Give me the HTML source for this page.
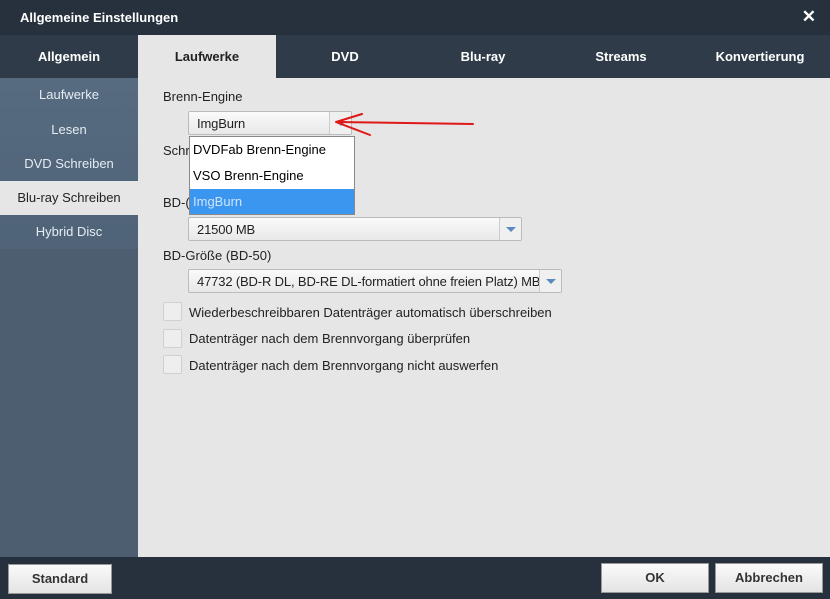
<!DOCTYPE html>
<html><head><style>
*{margin:0;padding:0;box-sizing:border-box}
body{width:830px;height:599px;background:#27313d;font-family:"Liberation Sans",sans-serif;position:relative;overflow:hidden}
.a{position:absolute}
.title{left:20px;top:10px;color:#fff;font-weight:bold;font-size:13px}
.tab{top:35px;height:43px;line-height:43px;text-align:center;color:#fff;font-weight:bold;font-size:13px;background:#2f3b49}
.side{left:0;top:78px;width:138px;height:479px;background:linear-gradient(#566a80,#44566a)}
.si{left:0;width:138px;height:34px;line-height:34px;text-align:center;color:#e6ecf2;font-size:13px}
.content{left:138px;top:78px;width:692px;height:479px;background:#e6e6e6}
.lbl{font-size:13px;color:#222}
.sel{background:linear-gradient(#fafafa,#e8e8e8);border:1px solid #bbb;border-radius:2px;font-size:13px;color:#222;padding-left:8px;line-height:23px;height:24px;white-space:nowrap;overflow:hidden;letter-spacing:-0.15px}
.arr{position:absolute;right:0;top:0;width:22px;height:22px;border-left:1px solid #ccc;background:#f0f0f0}
.arr:after{content:"";position:absolute;left:6px;top:9px;border-left:5px solid transparent;border-right:5px solid transparent;border-top:5px solid #5a8ac0}
.cb{width:19px;height:19px;background:#eee;border:1px solid #d0d0d0;border-radius:2px}
.btn{background:linear-gradient(#fafafa,#e4e4e4);border:1px solid #999;text-align:center;font-weight:bold;font-size:13px;color:#333;line-height:28px;height:30px}
</style></head><body>
<div class="a title">Allgemeine Einstellungen</div>
<div class="a" style="right:14px;top:7px;color:#fff;font-weight:bold;font-size:17px">✕</div>
<div class="a tab" style="left:0;width:138px">Allgemein</div>
<div class="a tab" style="left:138px;width:138px;background:#e6e6e6;color:#222">Laufwerke</div>
<div class="a tab" style="left:276px;width:138px">DVD</div>
<div class="a tab" style="left:414px;width:138px">Blu-ray</div>
<div class="a tab" style="left:552px;width:138px">Streams</div>
<div class="a tab" style="left:690px;width:140px">Konvertierung</div>
<div class="a side"></div>
<div class="a si" style="top:78px">Laufwerke</div>
<div class="a si" style="top:113px">Lesen</div>
<div class="a si" style="top:147px">DVD Schreiben</div>
<div class="a si" style="top:181px;background:#e6e6e6;color:#222">Blu-ray Schreiben</div>
<div class="a si" style="top:215px">Hybrid Disc</div>
<div class="a" style="left:0;top:249px;width:138px;height:308px;background:#4d5e71"></div>
<div class="a content"></div>
<div class="a lbl" style="left:163px;top:89px">Brenn-Engine</div>
<div class="a sel" style="left:188px;top:111px;width:164px">ImgBurn<div class="arr"></div></div>
<div class="a lbl" style="left:163px;top:143px">Schr</div>
<div class="a lbl" style="left:163px;top:195px">BD-(</div>
<div class="a" style="left:189px;top:136px;width:166px;height:79px;background:#fff;border:1px solid #888;font-size:13px">
<div style="padding-left:3px;height:26px;line-height:26px">DVDFab Brenn-Engine</div>
<div style="padding-left:3px;height:26px;line-height:26px">VSO Brenn-Engine</div>
<div style="padding-left:3px;height:25px;line-height:25px;background:#3b96f0;color:#cfe4ff">ImgBurn</div>
</div>
<div class="a sel" style="left:188px;top:217px;width:334px">21500 MB<div class="arr"></div></div>
<div class="a lbl" style="left:163px;top:248px">BD-Größe (BD-50)</div>
<div class="a sel" style="left:188px;top:269px;width:374px;padding-left:8px">47732 (BD-R DL, BD-RE DL-formatiert ohne freien Platz) MB<div class="arr"></div></div>
<div class="a cb" style="left:163px;top:302px"></div><div class="a lbl" style="left:189px;top:305px">Wiederbeschreibbaren Datenträger automatisch überschreiben</div>
<div class="a cb" style="left:163px;top:329px"></div><div class="a lbl" style="left:189px;top:331px">Datenträger nach dem Brennvorgang überprüfen</div>
<div class="a cb" style="left:163px;top:355px"></div><div class="a lbl" style="left:189px;top:358px">Datenträger nach dem Brennvorgang nicht auswerfen</div>
<svg class="a" style="left:330px;top:108px" width="150" height="30"><path d="M6 14 L143 16 M6 14 L32 6 M6 14 L40 27" stroke="#e01818" stroke-width="2" fill="none" stroke-linecap="round"/></svg>
<div class="a btn" style="left:8px;top:564px;width:104px">Standard</div>
<div class="a btn" style="left:601px;top:563px;width:108px">OK</div>
<div class="a btn" style="left:715px;top:563px;width:108px">Abbrechen</div>
</body></html>
